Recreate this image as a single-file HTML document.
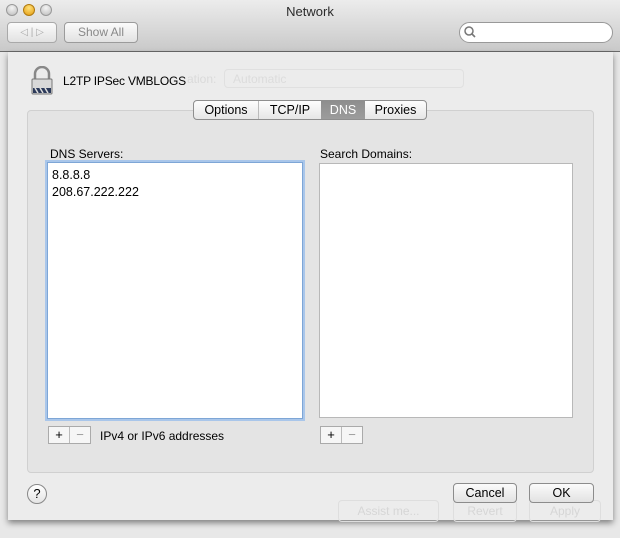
<!DOCTYPE html>
<html><head><meta charset="utf-8"><style>
*{margin:0;padding:0;box-sizing:border-box}
body{width:620px;height:538px;overflow:hidden;background:#e8e8e8;font-family:"Liberation Sans",sans-serif;font-size:12px;color:#000;position:relative}
.abs{position:absolute}
.tb{left:0;top:0;width:620px;height:52px;background:linear-gradient(#ececec,#c9c9c9);border-bottom:1px solid #6a6a6a}
.dot{width:12px;height:12px;border-radius:50%;top:4px;border:1px solid #999;background:radial-gradient(circle at 50% 30%,#f4f4f4,#bcbcbc)}
.btn{background:linear-gradient(#fbfbfb,#e2e2e2);border:1px solid #8c8c8c;border-radius:4px;text-align:center}
.sheet{left:8px;top:52px;width:605px;height:468px;background:#ececec;box-shadow:0 3px 6px rgba(0,0,0,.45)}
.ghost{color:#dadada}
</style></head><body>
<div class="abs tb"></div>
<div class="abs dot" style="left:6px"></div>
<div class="abs dot" style="left:23px;background:radial-gradient(circle at 50% 30%,#ffe27a,#e39a0e);border-color:#b07a10"></div>
<div class="abs dot" style="left:40px"></div>
<div class="abs" style="left:0;width:620px;top:4px;text-align:center;font-size:13px;color:#2b2b2b">Network</div>
<div class="abs btn" style="left:7px;top:22px;width:50px;height:21px;border-color:#a9a9a9;color:#aaa;font-size:10px;line-height:19px">◁ | ▷</div>
<div class="abs btn" style="left:64px;top:22px;width:74px;height:21px;border-color:#9b9b9b;color:#888;font-size:12px;line-height:19px">Show All</div>
<div class="abs" style="left:459px;top:22px;width:154px;height:21px;border:1px solid #999;border-radius:11px;background:#fff"></div>
<svg class="abs" style="left:463px;top:25px" width="14" height="14"><circle cx="6" cy="6" r="4" fill="none" stroke="#777" stroke-width="1.5"/><line x1="9" y1="9" x2="12" y2="12" stroke="#777" stroke-width="1.6"/></svg>

<div class="abs sheet"></div>
<!-- ghost background -->
<div class="abs ghost" style="left:187px;top:72px">ation:</div>
<div class="abs" style="left:224px;top:69px;width:240px;height:19px;border:1px solid #e0e0e0;border-radius:4px;color:#dcdcdc;padding:2px 8px">Automatic</div>
<div class="abs ghost" style="left:40px;top:116px;font-size:11px">Ethernet<br>Connected</div>
<div class="abs ghost" style="left:290px;top:125px">Status:&nbsp; Not Connected</div>
<div class="abs ghost" style="left:228px;top:452px">✓Show VPN status in menu bar</div>
<div class="abs" style="left:470px;top:448px;width:94px;height:22px;border:1px solid #dedede;border-radius:4px;color:#d6d6d6;text-align:center;line-height:20px">Advanced...</div>
<div class="abs" style="left:338px;top:500px;width:101px;height:22px;border:1px solid #dedede;border-radius:4px;color:#d6d6d6;text-align:center;line-height:20px">Assist me...</div>
<div class="abs" style="left:453px;top:500px;width:64px;height:22px;border:1px solid #dedede;border-radius:4px;color:#d6d6d6;text-align:center;line-height:20px">Revert</div>
<div class="abs" style="left:529px;top:500px;width:72px;height:22px;border:1px solid #dedede;border-radius:4px;color:#d6d6d6;text-align:center;line-height:20px">Apply</div>

<!-- lock -->
<svg class="abs" style="left:29px;top:66px" width="26" height="30"><path d="M6 13V8a7 7 0 0 1 14 0v5" fill="none" stroke="#888" stroke-width="2.5"/><rect x="3" y="13" width="20" height="15" rx="1" fill="#d8d8d8" stroke="#777"/><path d="M4 22h18v5H4z" fill="#2c3a5a"/><path d="M6 22l3 5M11 22l3 5M16 22l3 5" stroke="#ddd" stroke-width="1.5"/></svg>
<div class="abs" style="left:63px;top:74px;font-size:12px;letter-spacing:-0.2px">L2TP IPSec VMBLOGS</div>

<!-- group box -->
<div class="abs" style="left:27px;top:110px;width:567px;height:363px;border:1px solid #d0d0d0;border-radius:4px;background:#e4e4e4"></div>
<!-- tabs -->
<div class="abs" style="left:193px;top:100px;width:234px;height:20px;border:1px solid #8e8e8e;border-radius:4px;background:linear-gradient(#fdfdfd,#e6e6e6);display:flex;font-size:12.5px;line-height:18px;overflow:hidden">
<div style="width:65px;text-align:center;border-right:1px solid #bbb">Options</div>
<div style="width:62px;text-align:center">TCP/IP</div>
<div style="width:44px;text-align:center;background:linear-gradient(#8e8e8e,#9c9c9c);color:#fff">DNS</div>
<div style="flex:1;text-align:center">Proxies</div>
</div>

<div class="abs" style="left:50px;top:147px">DNS Servers:</div>
<div class="abs" style="left:320px;top:147px">Search Domains:</div>
<div class="abs" style="left:47px;top:162px;width:256px;height:257px;background:#fff;border:1px solid #7ea6d6;box-shadow:0 0 0 2px #a9c6ea;padding:4px 4px;font-size:12.5px;line-height:17px">8.8.8.8<br>208.67.222.222</div>
<div class="abs" style="left:319px;top:163px;width:254px;height:255px;background:#fff;border:1px solid #b8b8b8"></div>

<div class="abs" style="left:48px;top:426px;width:43px;height:18px;border:1px solid #aaa;background:#f6f6f6;display:flex;line-height:16px;font-size:13px"><div style="width:21px;text-align:center;border-right:1px solid #bbb">+</div><div style="flex:1;text-align:center;color:#999">−</div></div>
<div class="abs" style="left:100px;top:429px">IPv4 or IPv6 addresses</div>
<div class="abs" style="left:320px;top:426px;width:43px;height:18px;border:1px solid #aaa;background:#f6f6f6;display:flex;line-height:16px;font-size:13px"><div style="width:21px;text-align:center;border-right:1px solid #bbb">+</div><div style="flex:1;text-align:center;color:#999">−</div></div>

<div class="abs" style="left:27px;top:484px;width:20px;height:20px;border-radius:50%;border:1px solid #888;background:linear-gradient(#fff,#e4e4e4);text-align:center;line-height:18px;font-size:13px">?</div>
<div class="abs btn" style="left:453px;top:483px;width:64px;height:20px;line-height:18px;font-size:12.5px">Cancel</div>
<div class="abs btn" style="left:529px;top:483px;width:65px;height:20px;line-height:18px;font-size:12.5px">OK</div>
</body></html>
